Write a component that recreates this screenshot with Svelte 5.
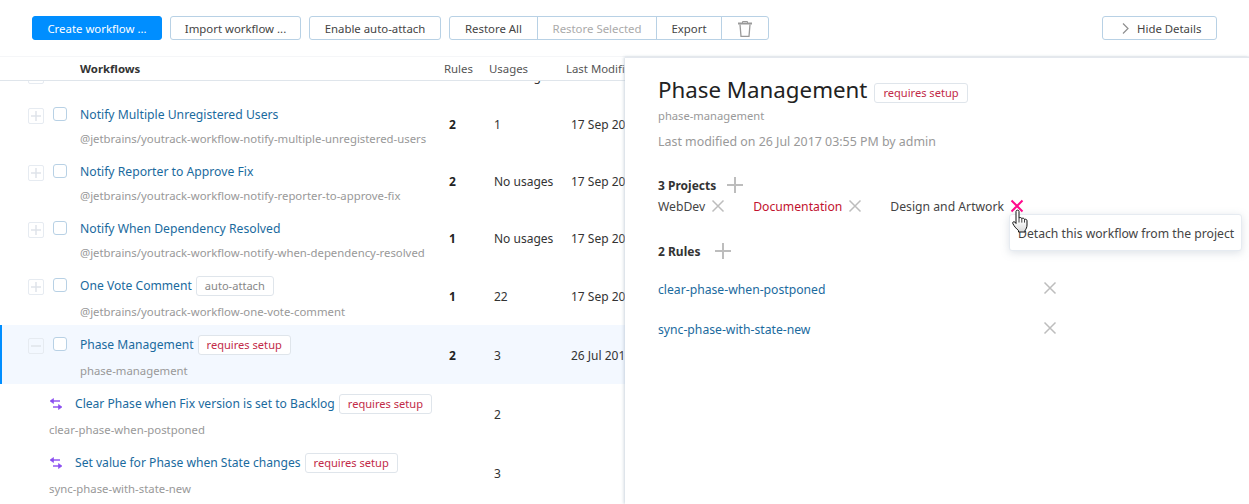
<script>
	const workflows = [
		{ usages: 'No usages', peek: true },
		{ name: 'Notify Multiple Unregistered Users', pkg: '@jetbrains/youtrack-workflow-notify-multiple-unregistered-users', rules: 2, usages: '1', date: '17 Sep 2017' },
		{ name: 'Notify Reporter to Approve Fix', pkg: '@jetbrains/youtrack-workflow-notify-reporter-to-approve-fix', rules: 2, usages: 'No usages', date: '17 Sep 2017' },
		{ name: 'Notify When Dependency Resolved', pkg: '@jetbrains/youtrack-workflow-notify-when-dependency-resolved', rules: 1, usages: 'No usages', date: '17 Sep 2017' },
		{ name: 'One Vote Comment', tag: 'auto-attach', pkg: '@jetbrains/youtrack-workflow-one-vote-comment', rules: 1, usages: '22', date: '17 Sep 2017' },
		{ name: 'Phase Management', tag: 'requires setup', pkg: 'phase-management', rules: 2, usages: '3', date: '26 Jul 2017', open: true }
	];

	const rules = [
		{ name: 'Clear Phase when Fix version is set to Backlog', id: 'clear-phase-when-postponed', usages: '2' },
		{ name: 'Set value for Phase when State changes', id: 'sync-phase-with-state-new', usages: '3' }
	];

	const projects = [
		{ name: 'WebDev' },
		{ name: 'Documentation', broken: true },
		{ name: 'Design and Artwork', hover: true }
	];
</script>

{#snippet cross(hover)}
	<svg class="cross" class:hover width="14" height="14" viewBox="0 0 14 14"><path d="M1.5 1.5l11 11M12.5 1.5l-11 11" /></svg>
{/snippet}

{#snippet plus()}
	<svg class="plus" width="18" height="18" viewBox="0 0 18 18"><path d="M9 1v16M1 9h16" /></svg>
{/snippet}

<div class="page">
	<header class="toolbar">
		<button class="btn primary">Create workflow ...</button>
		<button class="btn w-import">Import workflow ...</button>
		<button class="btn w-attach">Enable auto-attach</button>
		<div class="group">
			<button class="btn w-all">Restore All</button>
			<button class="btn w-sel" disabled>Restore Selected</button>
			<button class="btn w-export">Export</button>
			<button class="btn w-trash" aria-label="Delete">
				<svg width="14" height="16" viewBox="0 0 14 16" fill="none" stroke="#9a9a9a"><path d="M0 2.500h14" stroke-width="2" /><path d="M4.500 2V.5h5V2" stroke-width="1" /><path d="M2 3.500l1 11.800h8l1-11.800" stroke-width="1.300" /></svg>
			</button>
		</div>
		<button class="btn hide">
			<svg width="7" height="11" viewBox="0 0 7 11" fill="none" stroke="#8f8f8f" stroke-width="1.2"><path d="M1 .5l5 5-5 5" /></svg>
			Hide Details
		</button>
	</header>

	<div class="table-head">
		<span class="col-name">Workflows</span>
		<span class="col-rules">Rules</span>
		<span class="col-usages">Usages</span>
		<span class="col-date">Last Modified</span>
	</div>

	<div class="list">
		{#each workflows as w}
			<div class="row" class:open={w.open} class:peek={w.peek}>
				<span class="expand">
					<svg width="10" height="10" viewBox="0 0 10 10"><path d={w.open ? 'M0 5h10' : 'M5 0v10M0 5h10'} /></svg>
				</span>
				<span class="check"></span>
				<div class="info">
					{#if w.name}
						<div class="title" class:tagged={w.tag}>
							<span class="link">{w.name}</span>
							{#if w.tag}
								<span class="tag" class:warn={w.tag === 'requires setup'}>{w.tag}</span>
							{/if}
						</div>
						<div class="sub">{w.pkg}</div>
					{/if}
				</div>
				<b class="rules">{w.rules ?? ''}</b>
				<span class="usages">{w.usages}</span>
				<span class="date">{w.date ?? ''}</span>
			</div>
		{/each}
		{#each rules as r}
			<div class="rule-row">
				<div class="info">
					<div class="title tagged">
						<svg class="rule-icon" width="14" height="12" viewBox="0 0 14 12" fill="#8a4df0" stroke="#8a4df0" stroke-width="1.400"><path d="M11 3H2" fill="none" /><path d="M4.500.5L1 3l3.500 2.500zM9.500 6.500L13 9l-3.500 2.500z" stroke-width=".6" /><path d="M4 9h7" fill="none" /></svg>
						<span class="link">{r.name}</span>
						<span class="tag warn">requires setup</span>
					</div>
					<div class="sub">{r.id}</div>
				</div>
				<span class="usages">{r.usages}</span>
			</div>
		{/each}
	</div>

	<aside class="panel">
		<div class="panel-title">
			<h1>Phase Management</h1>
			<span class="tag warn">requires setup</span>
		</div>
		<div class="panel-id">phase-management</div>
		<div class="panel-meta">Last modified on 26 Jul 2017 03:55 PM by admin</div>

		<h2>3 Projects {@render plus()}</h2>
		<div class="projects">
			{#each projects as p}
				<span class="project" class:broken={p.broken}>{p.name} {@render cross(p.hover)}</span>
			{/each}
		</div>

		<h2 class="rules-head">2 Rules {@render plus()}</h2>
		{#each rules as r}
			<div class="panel-rule">
				<span class="link">{r.id}</span>
				{@render cross(false)}
			</div>
		{/each}
	</aside>

	<div class="tooltip">Detach this workflow from the project</div>
	<svg class="cursor" width="18" height="24" viewBox="0 0 18 24">
		<defs>
			<linearGradient id="hand-fill" x1="0" y1="0" x2="0" y2="1">
				<stop offset="0.45" stop-color="#fff" />
				<stop offset="1" stop-color="#d8d8d8" />
			</linearGradient>
		</defs>
		<path d="M4 2.500c0-1.800 3-1.800 3 0V9c.8-.8 2.600-.6 2.800.6.800-.8 2.500-.4 2.700.8.800-.5 2.500-.1 2.500 1.300v4.300c0 2.500-1 4-2 5.500V23H6.500v-1.500C4 19.500 2 17 .8 14.500c-.5-1.200 1-2.500 2-1.500L4 14.500z" fill="url(#hand-fill)" stroke="#111" stroke-width="1" stroke-linejoin="round" />
		<path d="M7 9v4.500M9.800 9.600v4M12.500 10.400v3.200" stroke="#111" stroke-width=".8" fill="none" />
	</svg>
</div>

<style>
	:global(body) {
		margin: 0;
		background: #fff;
	}

	.page {
		position: relative;
		width: 1249px;
		height: 504px;
		overflow: hidden;
		display: flex;
		flex-direction: column;
		font-family: 'Noto Sans', 'Open Sans', sans-serif;
		font-size: 12.2px;
		color: #333;
		background: #fff;
	}

	.toolbar {
		box-sizing: border-box;
		height: 57px;
		flex: none;
		display: flex;
		align-items: flex-start;
		gap: 8px;
		padding: 16px 32px 0;
		border-bottom: 1px solid #f5f6f8;
	}

	.btn {
		box-sizing: border-box;
		height: 24px;
		padding: 1px 0 0;
		display: flex;
		align-items: center;
		justify-content: center;
		font: inherit;
		font-size: 11.4px;
		color: #444;
		background: #fff;
		border: 1px solid #b8d1e5;
		border-radius: 3px;
	}

	.primary {
		width: 130px;
		color: #fff;
		background: #008eff;
		border-color: #008eff;
	}

	.w-import {
		width: 131px;
	}

	.w-attach {
		width: 132px;
	}

	.group {
		display: flex;
	}

	.group .btn {
		border-radius: 0;
		margin-left: -1px;
	}

	.group .btn:first-child {
		margin-left: 0;
		border-radius: 3px 0 0 3px;
	}

	.group .btn:last-child {
		border-radius: 0 3px 3px 0;
	}

	.w-all {
		width: 89px;
	}

	.w-sel {
		width: 120px;
		color: #aaa;
	}

	.w-export {
		width: 66px;
	}

	.w-trash {
		width: 48px;
	}

	.hide {
		width: 115px;
		margin-left: auto;
		gap: 8px;
		justify-content: flex-start;
		padding-left: 19px;
	}

	.table-head {
		box-sizing: border-box;
		height: 24px;
		flex: none;
		display: flex;
		align-items: center;
		border-bottom: 1px solid #dfe5eb;
		position: relative;
		background: #fff;
		z-index: 1;
		font-size: 11.4px;
		color: #555;
	}

	.col-name {
		width: 364px;
		margin-left: 80px;
		font-weight: 700;
		color: #333;
	}

	.col-rules {
		width: 45px;
	}

	.col-usages {
		width: 77px;
	}

	.list {
		flex: 1;
		overflow: hidden;
	}

	.row {
		box-sizing: border-box;
		display: grid;
		grid-template-columns: 16px 25px 375px 45px 77px 120px;
		align-items: center;
		padding-left: 28px;
		height: 57px;
		position: relative;
	}

	.row.peek {
		height: 40px;
		margin-top: -26px;
	}

	.row:has(.tagged) {
		height: 59px;
	}

	.row.open {
		background: #f3f8ff;
		box-shadow: inset 2px 0 0 #008eff;
	}

	.expand {
		box-sizing: border-box;
		align-self: start;
		margin-top: 13px;
		width: 16px;
		height: 16px;
		display: flex;
		align-items: center;
		justify-content: center;
		border: 1px solid #e6ebf1;
		border-radius: 2px;
	}

	.expand path {
		stroke: #dfe4ea;
		stroke-width: 1.5;
	}

	.check {
		box-sizing: border-box;
		align-self: start;
		margin: 12px 0 0 9px;
		width: 14px;
		height: 14px;
		background: #fff;
		border: 1px solid #b8d1e5;
		border-radius: 3px;
	}

	.info {
		padding-left: 11px;
		align-self: start;
		margin-top: 11px;
		white-space: nowrap;
	}

	.title {
		height: 17px;
		line-height: 17px;
		display: flex;
		align-items: center;
	}

	.title.tagged {
		height: 20px;
		line-height: 20px;
		margin-top: -1px;
		font-size: 12.1px;
	}

	.link {
		color: #1a6a9e;
	}

	.sub {
		margin-top: 7px;
		font-size: 11.35px;
		line-height: 17px;
		color: #999;
	}

	.rules,
	.usages,
	.date {
		padding-left: 5px;
		padding-top: 2px;
		white-space: nowrap;
		color: #333;
		font-size: 12px;
	}

	.rules {
		color: #222;
	}

	.tag {
		box-sizing: border-box;
		display: inline-flex;
		align-items: center;
		height: 20px;
		margin-left: 4px;
		padding: 0 8px;
		font-size: 11.1px;
		color: #888;
		background: #fff;
		border: 1px solid #dfe5eb;
		border-radius: 3px;
		white-space: nowrap;
	}

	.tag.warn {
		color: #c22a48;
	}

	.rule-row {
		height: 59px;
		display: flex;
		padding-left: 49px;
		box-sizing: border-box;
		position: relative;
	}

	.rule-row .info {
		padding-left: 0;
		width: 440px;
	}

	.rule-icon {
		margin-right: 12px;
		flex: none;
	}

	.rule-row .usages {
		align-self: center;
		padding-top: 0;
		margin-top: 2px;
	}

	.panel {
		position: absolute;
		left: 625px;
		top: 57px;
		right: 0;
		bottom: 0;
		box-sizing: border-box;
		padding: 15px 33px;
		background: #fff;
		border-top: 1px solid #e4e8ee;
		box-shadow: -1px 0 3px rgba(170, 185, 200, 0.6);
		z-index: 2;
	}

	.panel-title {
		display: flex;
		align-items: center;
		height: 32px;
	}

	.panel-title h1 {
		margin: 0;
		font-size: 22.3px;
		font-weight: 400;
		color: #222;
	}

	.panel-title .tag {
		margin-left: 7px;
		margin-top: 7px;
	}

	.panel-id,
	.panel-meta {
		color: #999;
		line-height: 18px;
	}

	.panel-id {
		margin-top: 2px;
		font-size: 11.2px;
	}

	.panel-meta {
		margin-top: 8px;
		font-size: 12.4px;
	}

	h2 {
		display: flex;
		align-items: center;
		gap: 10px;
		height: 18px;
		margin: 25px 0 0;
		font-size: 12px;
		font-weight: 700;
		color: #333;
	}

	.rules-head {
		margin-top: 27px;
		gap: 14px;
	}

	.plus path {
		stroke: #bdbdbd;
		stroke-width: 2;
	}

	.projects {
		display: flex;
		gap: 28px;
		margin-top: 3px;
		height: 18px;
		white-space: nowrap;
	}

	.project {
		display: inline-flex;
		align-items: center;
		gap: 6px;
		color: #444;
	}

	.project.broken {
		color: #c2112e;
	}

	.cross path {
		stroke: #bdbdbd;
		stroke-width: 1.5;
		fill: none;
	}

	.cross.hover path {
		stroke: #ff0a8c;
		stroke-width: 2;
	}

	.panel-rule {
		position: relative;
		width: 399px;
		height: 40px;
		display: flex;
		align-items: center;
		justify-content: space-between;
	}

	.panel-rule .cross {
		margin-top: -2px;
	}

	.rules-head + .panel-rule {
		margin-top: 9px;
	}

	.tooltip {
		position: absolute;
		left: 1009px;
		top: 214px;
		z-index: 3;
		box-sizing: border-box;
		width: 233px;
		height: 37px;
		padding-left: 8px;
		line-height: 37px;
		white-space: nowrap;
		color: #444;
		background: #fff;
		border: 1px solid #e6ebf1;
		border-radius: 3px;
		box-shadow: 0 2px 8px rgba(120, 140, 160, 0.25);
	}

	.cursor {
		position: absolute;
		left: 1012px;
		top: 209px;
		z-index: 4;
	}
</style>
